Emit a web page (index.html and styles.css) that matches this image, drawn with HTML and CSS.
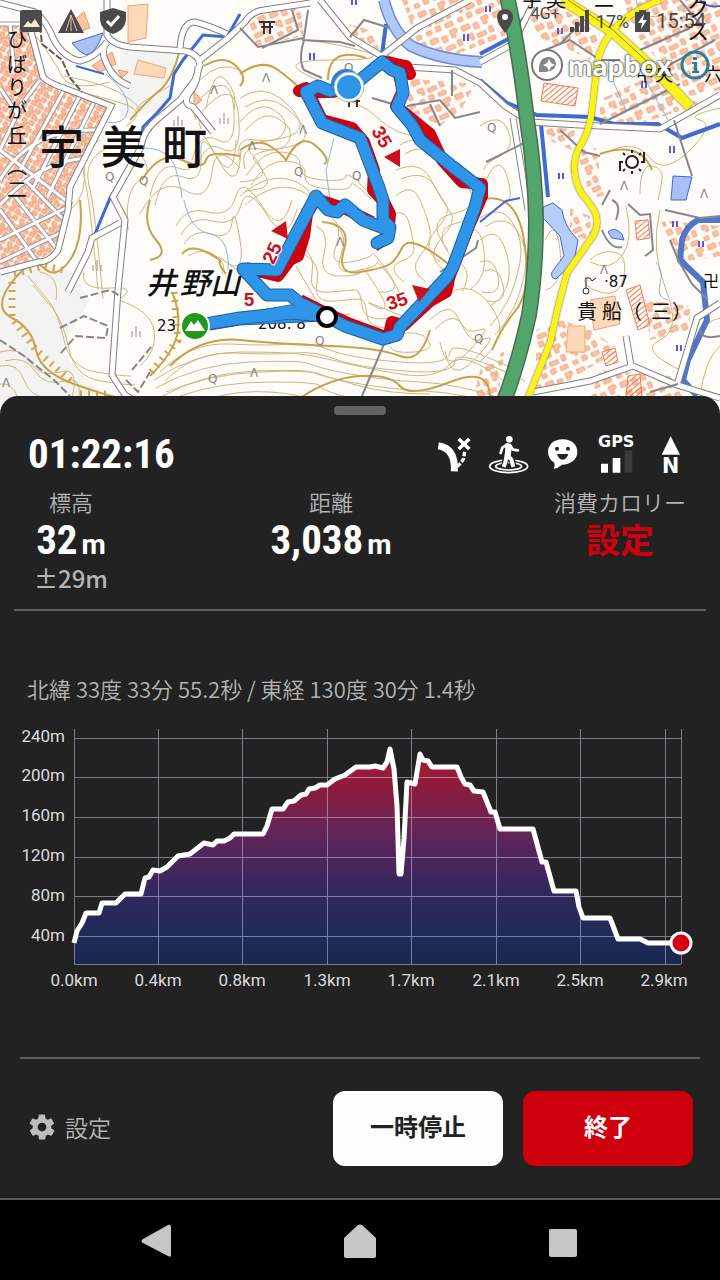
FILE: index.html
```
<!DOCTYPE html>
<html lang="ja">
<head>
  <meta charset="utf-8"/>
  <meta name="viewport" content="width=device-width, initial-scale=1"/>
  <link rel="stylesheet" href="styles.css">
  <title>活動中</title>
</head>
<body>
  <div class="map">
    <svg class="map-canvas" viewBox="0 0 720 416" preserveAspectRatio="xMidYMin slice" role="img" aria-label="地図">
      <defs>
        <pattern id="houses" width="15" height="13" patternUnits="userSpaceOnUse" patternTransform="rotate(28)">
          <path d="M1 1h4v3h2v3h-4v-2h-2zM8 1h5v4h-5zM1 8h5v4h-5zM8 7h3v2h3v3h-6z" fill="#fabf9f" stroke="#ee8a62" stroke-width=".8"/>
        </pattern>
        <pattern id="town" width="34" height="30" patternUnits="userSpaceOnUse" patternTransform="rotate(-24)">
          <path d="M2 2h8v5h-8zM14 4h5v6h-5zM24 1h7v4h-3v4h-4zM4 12h6v7h-3v-3h-3zM14 15h9v4h-9zM27 13h4v6h-4zM2 23h5v4h-5zM12 22h5v5h-5zM22 23h8v4h-8z" fill="#fbc4a4" stroke="#f0946c" stroke-width=".8"/>
        </pattern>
        <pattern id="hatch" width="4" height="4" patternUnits="userSpaceOnUse" patternTransform="rotate(-40)">
          <path d="M0 0h4" stroke="#ee7c55" stroke-width="2"/>
        </pattern>
        <g id="roads">
          <path d="M0 3L35 12Q46 20 54 40Q64 58 80 61Q95 58 107 42"/>
          <path d="M107 0V35Q112 45 130 47L185 51Q199 54 200 65L195 80L180 100L160 117Q143 130 141 147L113 197L125 220L118 290L112 375L125 395L140 404"/>
          <path d="M200 60L228 38L245 22Q252 11 264 10L310 3"/>
          <path d="M180 48Q182 22 195 22Q210 26 227 34"/>
          <path d="M107 42Q100 50 106 62Q113 80 130 86"/>
          <path d="M198 66Q199 82 188 95Q183 104 193 107L213 132"/>
          <path d="M320 0L350 37L383 57L407 67L455 70L480 83L505 106L530 122L580 125L660 129L720 95"/>
          <path d="M383 55L417 28L470 0"/>
          <path d="M480 62L513 44L532 6"/>
          <path d="M533 392L590 381L633 366L677 385L720 398"/>
          <path d="M626 336L631 366M677 385L697 318L720 303"/>
          <path d="M513 118L520 160L528 210"/>
          <path d="M68 292L88 252L92 238L120 223"/>
          <path d="M30 28L43 77Q50 84 64 88L111 106L70 187L68 210L58 250Q50 262 38 262L0 272"/>
        </g>
        <g id="streets">
          <path d="M0 88L16 112L40 80M0 24H36M10 24L14 70M22 104L0 150M64 90L20 170M80 95L32 190M95 100L48 196"/>
          <path d="M0 180Q30 128 96 130M0 205Q40 160 88 158M0 150L72 205M0 210L36 260M14 195L56 248M25 180L66 222M0 240L70 206M0 262L62 232"/>
        </g>
        <g id="highway">
          <path d="M507 -4Q519 50 527 120Q535 170 536 220Q536 270 529 315Q518 365 503 404"/>
        </g>
        <g id="main-road">
          <path d="M563 0L613 32L655 70L690 107" stroke-width="10"/>
          <path d="M660 0Q625 14 612 32Q597 50 596 75L592 110Q590 128 582 143Q572 157 575 175Q577 190 587 200L595 212Q600 224 593 236L567 273L558 307L550 343L527 400" stroke-width="6"/>
        </g>
        <g id="slopes">
          <path d="M240 98Q262 84 280 98T300 124T272 140T250 152T262 170T240 182"/>
          <path d="M240 122Q258 100 274 110T284 132T256 140T240 160"/>
          <path d="M246 176Q262 150 282 152T300 166T322 180T346 176T366 190"/>
          <path d="M240 196Q270 170 296 182T300 210"/>
          <path d="M400 145Q420 132 440 152T470 190T452 214T448 250"/>
          <path d="M396 170Q420 160 430 178T446 204T436 230T440 262"/>
          <path d="M330 216Q344 226 336 246T350 262T372 254T388 272T380 292"/>
          <path d="M300 246Q316 254 312 274T330 292T356 290T362 306T390 318"/>
          <path d="M192 160Q200 130 218 140T234 112T210 90T196 120"/>
          <path d="M150 196Q158 160 178 168T196 146T214 152T236 140"/>
          <path d="M176 226Q186 206 208 212T236 196T262 206T292 200"/>
          <path d="M98 290Q90 200 84 176T100 140"/>
          <path d="M28 276Q38 288 48 300T64 340T96 372T130 376"/>
          <path d="M0 352Q20 346 30 362T60 372T72 398"/>
          <path d="M160 372Q190 342 230 344T290 344T330 350T400 362T450 352T520 372"/>
          <path d="M156 388Q198 364 250 362T310 364T350 374T420 382T500 398"/>
          <path d="M430 320Q450 300 458 318T480 330T470 350T440 342"/>
          <path d="M480 218Q500 204 512 222T520 262T508 300T490 326M480 262Q494 256 498 276T482 292"/>
        </g>
        <g id="track">
          <path d="M195 326L240 318L290 313L326 316L345 326L383 339L397 335L400 327L447 277L453 267L475 207L480 188L453 167L420 140L412 125L397 107L403 93L400 73L392 70L382 62L360 80L350 87"/>
          <path d="M350 84L330 91L318 86L306 92L322 123L360 138L378 185L383 200V220L390 227L388 238L377 243"/>
          <path d="M386 229L363 220L345 205L337 212L328 210L316 196L277 270L243 269L267 295L290 295L300 303L326 316"/>
        </g>
      </defs>

      <rect width="720" height="416" fill="#fdfcf8"/>
      <path d="M0 258L70 270L90 300L60 350L120 416H0zM120 50L180 50L165 110L120 120z" fill="#f3f3f1"/>

      <!-- built-up areas -->
      <path d="M0 26H34L44 76L110 106L70 186L66 212L57 250L38 260L0 270z" fill="url(#houses)"/>
      <path d="M248 18L300 6L304 36L256 46zM402 0H500L506 36L440 60L418 44zM335 20L370 30L380 50L350 42zM403 78L476 84L462 108L440 126L410 110z" fill="url(#town)"/>
      <path d="M525 20L560 6L600 34L590 60L570 50L540 40zM622 0H720V90L690 96L640 40zM600 100L650 76L700 104L640 124H600z" fill="url(#town)"/>
      <path d="M545 125L575 130L572 150L548 140zM577 150L596 148L604 196L590 198zM570 208L590 216L592 240L570 236zM660 220L720 226V256L680 262zM645 300L690 306L690 330L650 340zM536 330L562 320L590 330L620 350L560 385L536 388zM480 370L505 350L498 396H474zM600 370L670 376L690 400H590z" fill="url(#town)"/>
      <path d="M84 12L90 28L78 32L74 20zM92 66L112 52L116 64L100 72zM118 70L128 72L122 78zM194 92L202 100L194 106z" fill="#fbc4a4" stroke="#f0946c"/>
      <path d="M128 6L148 4L146 38L128 42zM138 60L166 68L164 78L134 74zM568 326H585V352H566zM590 300L615 296L620 324L594 330z" fill="#fcd9b8" stroke="#f3a476"/>
      <g fill="url(#hatch)" stroke="#ee7c55">
        <path d="M544 83L578 88L575 106L541 101z"/>
        <path d="M626 290L640 285L650 325L638 330z"/>
        <path d="M635 221L648 220L650 238L637 240z"/>
        <path d="M602 352L615 348L618 362L606 366z"/>
        <path d="M628 376L640 374L642 398H626z"/>
      </g>

      <!-- contour lines -->
      <g class="contour">
        <use href="#slopes"/>
        <use href="#slopes" x="5" y="9"/>
        <path d="M304 40Q340 44 366 52T330 60T318 80M326 96Q360 100 378 118T420 136"/>
        <path d="M396 196Q412 182 420 200T430 230T420 256T426 282"/>
        <path d="M394 214Q406 208 410 226T414 250T400 262T404 282"/>
        <path d="M316 226Q330 232 324 254T340 276T362 270T378 290T374 306T402 316"/>
        <path d="M296 266Q304 280 316 300T350 314"/>
        <path d="M140 214Q160 176 184 190T212 172T240 168"/>
        <path d="M184 244Q194 228 212 234T232 222T240 240T226 262T240 272"/>
        <path d="M188 256Q204 246 216 256T222 274"/>
        <path d="M200 80Q220 60 240 70M206 108Q214 66 226 80T234 110"/>
        <path d="M70 210Q88 196 84 164T104 124M128 230Q124 190 140 180T136 150"/>
        <path d="M60 88Q100 96 124 104T126 126M64 76Q110 84 128 98T138 110T170 86"/>
        <path d="M36 36Q54 60 62 76T110 82M40 272Q60 276 56 300M84 272Q80 290 110 288T118 300Q150 310 154 330T140 366"/>
        <path d="M0 366Q18 362 24 380T50 398M0 384Q12 382 18 398"/>
        <path d="M154 380Q196 352 240 352T300 354T340 362T400 374T450 364T510 386"/>
        <path d="M166 392Q210 374 260 372T320 374T360 386T430 394"/>
        <path d="M180 396Q220 382 270 382T320 386T350 398"/>
        <path d="M212 398Q240 390 270 392T310 400M400 334Q420 330 428 340T414 352T390 346"/>
        <path d="M410 322Q440 296 456 290T486 300T500 330T480 362"/>
        <path d="M480 240Q496 226 504 246T508 282T490 306"/>
        <path d="M466 232Q480 222 484 250T470 290M458 262Q474 270 462 292"/>
        <path d="M480 126Q500 112 508 130T500 156T484 170M486 180Q500 150 508 180T496 198"/>
        <path d="M612 150Q636 140 650 158T690 150T700 120T720 108M640 194Q640 164 652 166T662 180T658 200"/>
        <path d="M590 260Q600 250 614 252T624 276T600 292T586 276M545 240Q556 216 560 250T546 290"/>
        <path d="M626 206Q634 240 622 256T590 262M660 210Q650 250 666 290T660 340T680 370"/>
        <path d="M696 340Q706 320 720 318M700 398Q704 360 720 346M636 0Q640 20 660 16"/>
      </g>
      <g class="contour contour-index">
        <path d="M240 74Q262 58 278 70T304 92T316 110M328 80Q328 46 366 58"/>
        <path d="M240 150Q258 138 270 146T286 160Q300 132 316 146T324 164"/>
        <path d="M204 66Q224 54 236 66T240 86M180 50Q172 80 160 90T130 120"/>
        <path d="M80 200Q84 240 70 260T44 268T12 282T12 318T36 350T74 384T120 398"/>
        <path d="M150 200Q142 224 156 240T150 260M182 254Q190 244 206 252T220 262T226 274"/>
        <path d="M142 180Q160 150 182 160T206 160T240 156"/>
        <path d="M322 222Q352 224 344 250T360 272T390 264T402 248T432 252T448 268"/>
        <path d="M172 292Q180 310 178 330T150 376"/>
        <path d="M170 366Q200 336 240 340T330 346T400 356T430 330"/>
        <path d="M300 398Q330 378 360 376T400 386T450 382T490 398"/>
        <path d="M480 200Q516 190 524 240T516 310T492 350M600 154Q640 140 652 170"/>
      </g>
      <path class="cliff" d="M12 282V318L36 350L74 384M14 274L44 266L64 270M174 292L178 340L148 376M80 394H108"/>

      <!-- water -->
      <g class="river">
        <path d="M72 43L103 33Q96 54 86 55Q78 52 72 43z" fill="#a9c0f6" stroke-width="1"/>
        <path d="M543 207L553 203L562 210Q564 226 578 240L574 262L556 279Q550 278 552 272L564 256L560 236L543 218z" fill="#b6cdfa" stroke-width="1"/>
        <path d="M673 176L692 177L686 200H671zM608 232Q614 226 622 234L624 240L612 238z" fill="#a9c0f6" stroke-width="1"/>
        <path d="M240 14L227 37L203 35L183 60L174 74L170 98L157 113L143 127L140 146L110 198L95 234" fill="none" stroke-width="3"/>
        <path d="M384 0Q391 30 411 46Q440 60 482 62" fill="none" stroke="#6d8fd4" stroke-width="12"/>
        <path d="M384 0Q391 30 411 46Q440 60 482 62" fill="none" stroke="#b2c8f8" stroke-width="9"/>
        <path d="M386 24L382 55M480 80L507 103L537 115L590 117L614 124L658 124L682 138L720 124M541 124L548 197M480 54L510 38L524 18" fill="none" stroke-width="4"/>
        <path d="M76 66L104 74M480 222L506 201L520 198M700 0Q706 8 720 6" fill="none" stroke-width="2"/>
        <path d="M720 220H698Q686 226 682 240L680 260L703 282L707 320L688 360L683 380L697 396" fill="none" stroke="#5076c8" stroke-width="6"/>
      </g>
      <path class="stream" d="M106 74Q130 94 128 110T104 122M143 148Q170 148 176 170T182 198M184 200Q190 230 210 234T228 270M334 138L326 170L330 200M608 70L626 110M640 70L668 120M656 262Q664 270 660 284T668 300"/>

      <!-- roads -->
      <use href="#streets" class="street-edge"/>
      <use href="#streets" class="street-fill"/>
      <use href="#roads" class="road-edge"/>
      <use href="#roads" class="road-fill"/>
      <path class="lane" d="M240 28L258 47L304 38L308 10M302 40L340 42L355 46M304 40Q298 60 304 70L322 78M262 48L298 30L292 10M350 37L364 20L390 28M372 98L396 105M407 106L440 100L455 118L480 112M452 96V70M430 104L440 126M560 44L590 14M545 50L570 40L600 60L620 60M640 50L690 28M660 70L715 40M600 124L680 84M560 130L584 152L600 156M486 162L530 140M610 190L602 205M674 120L692 176M628 204L640 215L650 214L653 250L645 256M602 230Q610 250 622 247M680 0L700 24M665 210L700 218L720 216M670 240L678 260L692 284L708 300M612 200Q622 204 616 220M650 392L678 384M700 330Q702 340 720 336M362 396L384 344M440 272L476 248L478 240"/>
      <path class="lane lane-dashed" d="M80 298L110 290L120 296M60 328L84 316L108 326L106 338L76 336L60 354M126 380L138 392L150 372M132 370L152 346M0 340L24 356L54 380L70 396"/>
      <path d="M40 26L42 44L62 60L70 78L82 92" fill="none" stroke="#5c5c5c" stroke-width="2" stroke-dasharray="7 2"/>
      <use href="#highway" class="highway-edge"/>
      <use href="#highway" class="highway-fill"/>
      <use href="#main-road" class="main-edge"/>
      <use href="#main-road" class="main-fill"/>
      <path d="M568 0L613 30L652 66" fill="none" stroke="#8f8a20" stroke-width="1"/>

      <!-- vegetation and land marks -->
      <g class="symbol">
        <text x="105" y="181">Q</text><text x="139" y="185">Q</text><text x="294" y="176">Q</text><text x="352" y="180">Q</text><text x="344" y="72">Q</text><text x="208" y="383">Q</text><text x="315" y="345">Q</text><text x="474" y="343">Q</text><text x="487" y="132">Q</text>
        <text x="210" y="94">Λ</text><text x="262" y="82">Λ</text><text x="299" y="134">Λ</text><text x="248" y="150">Λ</text><text x="336" y="246">Λ</text><text x="250" y="377">Λ</text><text x="2" y="387">Λ</text><text x="620" y="190">Λ</text><text x="700" y="198">Λ</text><text x="600" y="274">Λ</text>
      </g>
      <path d="M174 120v6M178 116v10M182 120v6M220 118v6M224 113v11M228 118v6M93 265v6M97 260v11M101 265v6M132 331v6M136 326v11M140 331v6" stroke="#8c8c8c" stroke-width="1"/>
      <path d="M352 0v5M356 0v5M310 53v7M314 53v7M464 34v7M468 34v7M486 6v6M490 6v6M558 28v6M562 28v6M642 81v7M646 81v7M670 146v7M674 146v7M559 173v6M563 173v6M673 221v6M677 221v6M699 241v6M703 241v6M677 345v6M681 345v6" stroke="#5a5ad8" stroke-width="2"/>
      <path d="M259 22H275M261 27H273M264 22V34M270 22V34M346 101H360M349 98V107M357 98V107" stroke="#333" stroke-width="2" fill="none"/>
      <g fill="none" stroke="#222" stroke-width="2">
        <circle cx="632" cy="162" r="6"/>
        <path d="M632 153v-3M632 171v3M623 162h-3v9M641 162h3v-10M625 155l-2-2M639 155l2-2M625 169l-2 2M639 169l2 2"/>
        <path d="M586 288v-10h4l2 3 4-3" stroke-width="1"/>
        <circle cx="586" cy="291" r="3" stroke-width="1"/>
      </g>

      <!-- place names -->
      <g class="place">
        <text font-size="45" font-weight="500" x="39 101 162" y="164">宇美町</text>
        <text font-size="20" x="7 7 7 7 7" y="47 72 95 118 143">ひばりが丘</text>
        <text font-size="20" x="7 7" y="174 197">︵二</text>
        <text font-size="30" font-weight="500" font-style="italic" x="146 180 210" y="294">井野山</text>
        <text font-size="20" x="577 602 622 651 672" y="319">貴船（三）</text>
        <text font-size="20" x="522 546 594" y="7">字美二</text>
        <text font-size="22" x="687 687" y="16 39">クス</text>
        <text font-size="18" x="636 655 704" y="81">中央六</text>
        <text font-size="16" x="703" y="287">卍</text>
        <text class="height" x="604" y="287">·87</text>
        <text class="height" x="157" y="331">23</text>
        <text class="height" x="258" y="329">208. 8</text>
      </g>

      <!-- planned course (red) below, recorded track (blue) above -->
      <g class="course">
        <path d="M326 313L350 324L388 338L392 322L404 325L430 301L446 292L448 284L449 278L468 228L482 196V184L462 182L442 160L430 134L396 106L403 90L398 72L410 74L406 66L382 61"/>
        <path d="M350 88L332 92L310 92L299 91L306 88L322 120L352 128L364 142L374 170L373 190L384 202L390 214L388 236L374 246"/>
        <path d="M372 222L346 209L316 199L307 214L304 236L298 256L290 260L278 276L246 268M300 300L326 313"/>
      </g>
      <path d="M210 330L212 319L238 314L296 304L330 315L322 321L240 325z" fill="#2f95e8" stroke="#1e5f9e" stroke-width="1"/>
      <use href="#track" class="track-edge"/>
      <path d="M212 328L214 320L240 315L290 305L326 315L240 324z" fill="#2f95e8"/>
      <use href="#track" class="track-fill"/>

      <g class="course-label">
        <text transform="translate(382 137) rotate(60)">35</text>
        <text transform="translate(272 253) rotate(-65)">25</text>
        <text transform="translate(249 299)">5</text>
        <text transform="translate(397 301) rotate(-18)">35</text>
        <path d="M384 157L400 149V167zM271 231L286 221L288 239zM412 285L430 289L419 302z" stroke="none"/>
      </g>
      <circle cx="327" cy="317" r="9" fill="#fff" stroke="#000" stroke-width="4"/>
      <circle cx="346" cy="84" r="15" fill="#2f7fc9"/>
      <circle cx="349" cy="87" r="15" fill="#fff" stroke="#9bb5cc"/>
      <circle cx="349" cy="87" r="12" fill="#2f95e8"/>
      <circle cx="195" cy="326" r="15" fill="#fff"/>
      <circle cx="195" cy="326" r="13" fill="#23991c"/>
      <path d="M185 331L191 321L194 325L198 320L205 331z" fill="#fff"/>
    </svg>

    <div class="statusbar">
      <svg width="22" height="22" viewBox="0 0 22 22"><rect width="22" height="22" rx="2"/><path d="M3 17L8 11L11 14L15 9L20 17z" fill="#f5ead2"/></svg>
      <svg width="26" height="24" viewBox="0 0 26 24"><path d="M13 0L26 24H0z"/><path d="M13 6L8 22M13 6V22M13 6L19 22" fill="none" stroke="#f0b7a0" stroke-width="1"/></svg>
      <svg width="26" height="26" viewBox="0 0 26 26"><path d="M13 0L26 4V12Q25 22 13 26Q1 22 0 12V4z"/><path d="M7 13L11 17L19 8" fill="none" stroke="#fff" stroke-width="3"/></svg>
      <svg class="push" width="16" height="24" viewBox="0 0 16 24"><path d="M8 0A8 8 0 0 1 16 8Q16 14 8 24Q0 14 0 8A8 8 0 0 1 8 0z"/><circle cx="8" cy="8" r="3" fill="#fff"/></svg>
      <span class="network">4G+</span>
      <svg width="20" height="22" viewBox="0 0 20 22"><path d="M0 17h4v5h-4zM5 12h4v10h-4zM10 6h4v16h-4zM15 0h4v22h-4z"/></svg>
      <span class="battery">17%</span>
      <svg width="15" height="22" viewBox="0 0 15 22"><path d="M4 0H11V2H15V22H0V2H4z"/><path d="M9 4L3 13H7L6 19L12 10H8z" fill="#fff"/></svg>
      <span>15:54</span>
    </div>

    <div class="attribution">
      <svg width="34" height="34" viewBox="0 0 34 34"><circle cx="17" cy="17" r="15" fill="#fff" stroke="#777" stroke-width="2"/><path d="M9 24Q8 9 19 9Q26 10 26 16Q25 25 9 24z" fill="#858585"/><path d="M19 11L21 15L25 17L21 19L19 23L17 19L13 17L17 15z" fill="#fff"/></svg>
      <span class="mapbox">mapbox</span>
      <button class="info" aria-label="地図について">
        <svg width="30" height="30" viewBox="0 0 30 30"><circle cx="15" cy="15" r="13" fill="none" stroke="#25809a" stroke-width="3"/><path d="M13 7h4v3h-4zM12 12h5v9h2v2h-7v-2h2v-7h-2z" fill="#25809a"/></svg>
      </button>
    </div>
  </div>

  <main class="panel">
    <button class="handle" aria-label="パネルを開閉"></button>
    <div class="top-row">
      <div class="time">01:22:16</div>
      <div class="indicators">
        <!-- off course warning -->
        <svg width="34" height="39" viewBox="48 38 102 117"><path d="M52 70Q104 78 100 147" fill="none" stroke="#fff" stroke-width="21"/><path d="M113 50L145 80M145 50L113 80" stroke="#fff" stroke-width="11"/><path d="M131 88L128 108Q122 122 108 132" fill="none" stroke="#fff" stroke-width="10" stroke-dasharray="14 5"/></svg>
        <!-- live position -->
        <svg width="41" height="39" viewBox="204 38 123 117"><g fill="none" stroke="#fff" stroke-width="5"><ellipse cx="266" cy="132" rx="57" ry="19"/><ellipse cx="266" cy="132" rx="39" ry="11"/></g><circle cx="268" cy="51" r="10" fill="#fff"/><path d="M264 70L259 98L275 108L280 135M260 98L252 134" fill="none" stroke="#222" stroke-width="19"/><path d="M264 72L260 98L274 111L280 134M260 96L257 116L251 134" fill="none" stroke="#fff" stroke-width="12" stroke-linejoin="round"/><path d="M262 66L247 76L242 92M270 68L279 82L294 84" fill="none" stroke="#fff" stroke-width="8" stroke-linecap="round" stroke-linejoin="round"/><path d="M256 64Q270 60 276 70L272 102L256 98z" fill="#fff"/></svg>
        <svg width="31" height="39" viewBox="381 38 93 117"><path d="M428 51C455 51 472 67 472 89C472 111 452 127 426 127Q414 138 401 139Q406 132 403 121Q384 110 384 89C384 67 402 51 428 51z" fill="#fff"/><circle cx="411" cy="79" r="6" fill="#222"/><circle cx="444" cy="79" r="6" fill="#222"/><path d="M411 95H445Q440 112 428 112Q415 111 411 95z" fill="#222"/></svg>
        <svg width="37" height="39" viewBox="537 38 111 117"><text class="gps" x="537" y="75">GPS</text><path d="M546 124h21v27h-21zM581 107h23v44h-23z" fill="#fff"/><path d="M617 84h23v67h-23z" fill="#3a3a3a"/></svg>
        <svg width="21" height="39" viewBox="720 38 63 117"><path d="M752 42L780 97H725z" fill="#fff"/><text class="north" x="752" y="152">N</text></svg>
      </div>
    </div>

    <div class="metrics">
      <div class="metric">
        <div class="label">標高</div>
        <div class="value">32<span class="unit">m</span></div>
        <div class="accuracy">±29m</div>
      </div>
      <div class="metric">
        <div class="label">距離</div>
        <div class="value">3,038<span class="unit">m</span></div>
      </div>
      <div class="metric">
        <div class="label">消費カロリー</div>
        <a class="set-link" href="#settings">設定</a>
      </div>
    </div>

    <div class="location">北緯 33度 33分 55.2秒 / 東経 130度 30分 1.4秒</div>

    <svg class="chart" viewBox="0 0 720 280" role="img" aria-label="標高グラフ">
      <defs>
        <linearGradient id="elevation" gradientUnits="userSpaceOnUse" x1="0" y1="30" x2="0" y2="245">
          <stop offset="0" stop-color="#b4152f"/>
          <stop offset=".12" stop-color="#981a38"/>
          <stop offset=".4" stop-color="#602558"/>
          <stop offset=".65" stop-color="#33285f"/>
          <stop offset=".85" stop-color="#202a58"/>
          <stop offset="1" stop-color="#1b2850"/>
        </linearGradient>
      </defs>
      <path fill="url(#elevation)" d="M74 245V224L77 212L82 204L86 194H99L102 184H116L125 175H141L145 159L149 158L153 151L160 152L167 148L178 137L190 135L204 124L213 126L217 122H224L230 119L234 115H263L267 107L272 90H283L288 83L294 82L301 76L306 75L309 70L315 69L320 66H327L335 60L345 56L356 48H370L375 47L383 49L387 43L390 30L394 50L397 87L399 155H401L404 120L407 63L415 65L420 35L423 41L428 42L432 48H457L461 58L465 65L470 66L474 72L483 73L491 93H495L500 110H533L542 143H546L554 172H576L579 188L583 199H610L618 220H640L648 224H681V245z"/>
      <path class="grid" d="M74 10V245M158 10V245M242 10V245M327 10V245M411 10V245M496 10V245M580 10V245M665 10V245M681 10V245M74 19H681M74 58H681M74 98H681M74 138H681M74 177H681M74 217H681M74 245H681"/>
      <path class="profile" d="M74 224L77 212L82 204L86 194H99L102 184H116L125 175H141L145 159L149 158L153 151L160 152L167 148L178 137L190 135L204 124L213 126L217 122H224L230 119L234 115H263L267 107L272 90H283L288 83L294 82L301 76L306 75L309 70L315 69L320 66H327L335 60L345 56L356 48H370L375 47L383 49L387 43L390 30L394 50L397 87L399 155H401L404 120L407 63L415 65L420 35L423 41L428 42L432 48H457L461 58L465 65L470 66L474 72L483 73L491 93H495L500 110H533L542 143H546L554 172H576L579 188L583 199H610L618 220H640L648 224H681"/>
      <circle cx="681" cy="224" r="10" fill="#d7000f" stroke="#fff" stroke-width="3"/>
      <g class="axis axis-y">
        <text x="65" y="23">240m</text>
        <text x="65" y="62">200m</text>
        <text x="65" y="102">160m</text>
        <text x="65" y="142">120m</text>
        <text x="65" y="182">80m</text>
        <text x="65" y="222">40m</text>
      </g>
      <g class="axis axis-x">
        <text x="74" y="267">0.0km</text>
        <text x="158" y="267">0.4km</text>
        <text x="242" y="267">0.8km</text>
        <text x="327" y="267">1.3km</text>
        <text x="411" y="267">1.7km</text>
        <text x="496" y="267">2.1km</text>
        <text x="580" y="267">2.5km</text>
        <text x="664" y="267">2.9km</text>
      </g>
    </svg>

    <div class="actions">
      <button class="settings">
        <svg width="30" height="30" viewBox="0 0 24 24"><path fill="#bdbdbd" d="M19.4 13a7.5 7.5 0 0 0 0-2l2.1-1.6a.5.5 0 0 0 .1-.7l-2-3.400a.5.5 0 0 0-.6-.2l-2.500 1a7.300 7.300 0 0 0-1.700-1l-.4-2.600a.5.5 0 0 0-.5-.5h-4a.5.5 0 0 0-.5.5l-.4 2.600a7.300 7.300 0 0 0-1.700 1l-2.500-1a.5.5 0 0 0-.6.2l-2 3.400a.5.5 0 0 0 .1.700L4.600 11a7.500 7.500 0 0 0 0 2l-2.100 1.600a.5.5 0 0 0-.1.700l2 3.400a.5.5 0 0 0 .6.200l2.500-1a7.300 7.300 0 0 0 1.700 1l.4 2.600a.5.5 0 0 0 .5.500h4a.5.5 0 0 0 .5-.5l.4-2.600a7.300 7.300 0 0 0 1.700-1l2.500 1a.5.5 0 0 0 .6-.2l2-3.400a.5.5 0 0 0-.1-.7zM12 15.500a3.500 3.500 0 1 1 0-7 3.500 3.500 0 0 1 0 7z"/></svg>
        設定
      </button>
      <button class="btn btn-pause">一時停止</button>
      <button class="btn btn-stop">終了</button>
    </div>
  </main>

  <nav class="navbar">
    <button aria-label="戻る"><svg width="34" height="34" viewBox="0 0 34 34"><path d="M3 15L28 1Q31 0 31 3V31Q31 34 28 32L3 19Q0 17 3 15z"/></svg></button>
    <button aria-label="ホーム"><svg width="34" height="34" viewBox="0 0 34 34"><path d="M1 14L15 1Q17 0 19 1L33 14V32Q33 34 31 34H3Q1 34 1 32z"/></svg></button>
    <button aria-label="履歴"><svg width="34" height="34" viewBox="0 0 34 34"><rect x="3" y="5" width="28" height="28" rx="2"/></svg></button>
  </nav>
</body>
</html>
```
FILE: styles.css
```
* {
  box-sizing: border-box;
}

body {
  margin: 0;
  min-height: 100vh;
  display: flex;
  flex-flow: column;
  background: #000;
  color: #fff;
  font-family: Roboto, "Noto Sans CJK JP", sans-serif;
}

button {
  border: 0;
  padding: 0;
  background: none;
  color: inherit;
  font: inherit;
  cursor: pointer;
}

svg {
  display: block;
}

/* map */

.map {
  position: relative;
  flex: 0 0 auto;
}

.map-canvas {
  width: 100%;
  height: 416px;
}

.contour {
  fill: none;
  stroke: #ceb680;
  stroke-width: 1;
}

.contour-index {
  stroke: #c9a04c;
  stroke-width: 2;
}

.cliff {
  fill: none;
  stroke: #cfa845;
  stroke-width: 7;
  stroke-dasharray: 2 6;
}

.river {
  stroke: #3f6ad0;
}

.stream {
  fill: none;
  stroke: #86b8ea;
  stroke-width: 1;
}

.street-edge,
.street-fill,
.road-edge,
.road-fill,
.main-edge,
.main-fill,
.highway-edge,
.highway-fill {
  fill: none;
}

.street-edge {
  stroke: #9a9a9a;
  stroke-width: 5;
}

.street-fill {
  stroke: #fff;
  stroke-width: 3;
}

.road-edge {
  stroke: #808080;
  stroke-width: 7;
}

.road-fill {
  stroke: #fff;
  stroke-width: 5;
}

.lane {
  fill: none;
  stroke: #85878c;
  stroke-width: 2;
}

.lane-dashed {
  stroke-dasharray: 8 3;
}

.highway-edge {
  stroke: #4a6b52;
  stroke-width: 16;
}

.highway-fill {
  stroke: #52a66c;
  stroke-width: 13;
}

.main-edge {
  stroke: #8d8b45;
  filter: drop-shadow(0 0 1px #77752f);
}

.main-fill {
  stroke: #fbf21c;
}

.symbol {
  font: 12px "DejaVu Sans", sans-serif;
  fill: #858585;
}

.place {
  font-family: "Noto Sans CJK JP", sans-serif;
  fill: #111;
}

.height {
  font: 15px "DejaVu Sans", sans-serif;
}

.course {
  fill: none;
  stroke: #d1000f;
  stroke-width: 12;
  stroke-linejoin: round;
}

.track-edge,
.track-fill {
  fill: none;
  stroke-linejoin: round;
  stroke-linecap: round;
}

.track-edge {
  stroke: #1e5f9e;
  stroke-width: 13;
}

.track-fill {
  stroke: #2f95e8;
  stroke-width: 11;
}

.course-label {
  font: bold 19px "Liberation Sans", sans-serif;
  fill: #cb1020;
  stroke: #fff;
  stroke-width: 2;
  paint-order: stroke;
  text-anchor: middle;
  dominant-baseline: central;
}

/* overlays on the map */

.statusbar {
  position: absolute;
  top: 8px;
  left: 20px;
  right: 14px;
  display: flex;
  align-items: center;
  gap: 6px;
  height: 26px;
  color: #474747;
  fill: #4a4a4a;
  font-size: 20px;
}

.statusbar svg + svg {
  margin-left: 10px;
}

.statusbar svg.push {
  margin-left: auto;
  margin-right: 12px;
}

.network {
  align-self: flex-start;
  margin-right: 4px;
  font-size: 16px;
  line-height: 12px;
}

.battery {
  font-size: 18px;
}

.attribution {
  position: absolute;
  top: 48px;
  right: 10px;
  display: flex;
  align-items: center;
  gap: 4px;
}

.mapbox {
  color: #fff;
  font: 900 29px/34px Lato, sans-serif;
  text-shadow: 0 0 1px #444, 0 0 2px #444, 0 0 2px #555;
}

.info {
  margin-left: 4px;
}

/* sheet with the activity data */

.panel {
  position: relative;
  flex: 1 0 auto;
  display: flex;
  flex-flow: column;
  margin-top: -20px;
  padding-top: 10px;
  border-bottom: 2px solid #5b5b5b;
  border-radius: 18px 18px 0 0;
  background: #222;
}

.handle {
  align-self: center;
  width: 52px;
  height: 9px;
  border-radius: 4px;
  background: #636363;
}

.top-row {
  display: flex;
  justify-content: space-between;
  align-items: center;
  margin-top: 16px;
  padding: 0 23px 0 28px;
}

.time,
.value {
  font-family: "Roboto Condensed", Roboto, sans-serif;
  font-weight: bold;
  font-size: 41px;
  line-height: 46px;
}

.indicators {
  display: grid;
  grid-template-columns: repeat(5, 54px);
  justify-items: center;
}

.gps,
.north {
  font-family: "DejaVu Sans", sans-serif;
  font-weight: bold;
  fill: #fff;
}

.gps {
  font-size: 48px;
}

.north {
  font-size: 62px;
  text-anchor: middle;
}

.metrics {
  display: flex;
  justify-content: space-between;
  margin: 8px 14px 0;
  padding: 0 20px 21px;
  border-bottom: 2px solid #606060;
}

.metric {
  display: flex;
  flex-flow: column;
  align-items: center;
}

.label,
.location {
  color: #b4b4b4;
  font-family: "Noto Sans CJK JP", sans-serif;
  font-weight: 350;
  font-size: 22px;
  line-height: 32px;
}

.unit {
  margin-left: 4px;
  font-family: Roboto, sans-serif;
  font-size: 28px;
}

.accuracy {
  color: #b4b4b4;
  font-family: "Noto Sans CJK JP", sans-serif;
  font-weight: 500;
  font-size: 24px;
  line-height: 20px;
}

.set-link {
  color: #d1000f;
  font-family: "Noto Sans CJK JP", sans-serif;
  font-weight: bold;
  font-size: 34px;
  line-height: 44px;
  text-decoration: none;
}

.location {
  margin: 61px 27px 15px;
}

.chart {
  width: 100%;
}

.grid {
  fill: none;
  stroke: #c4c4e0;
  stroke-opacity: .55;
  stroke-width: 1;
  shape-rendering: crispEdges;
}

.profile {
  fill: none;
  stroke: #fff;
  stroke-width: 5;
  stroke-linejoin: round;
}

.axis {
  font-size: 17px;
  fill: #dcdcdc;
}

.axis-x {
  text-anchor: middle;
}

.axis-y {
  text-anchor: end;
}

.actions {
  display: flex;
  align-items: center;
  gap: 20px;
  margin: 58px 20px 0;
  padding: 32px 7px;
  border-top: 2px solid #606060;
}

.settings {
  display: flex;
  align-items: center;
  gap: 8px;
  margin-right: auto;
  padding-bottom: 4px;
  color: #b4b4b4;
  font: 350 23px/30px "Noto Sans CJK JP", sans-serif;
}

.btn {
  width: 170px;
  height: 75px;
  padding-bottom: 6px;
  border-radius: 12px;
  font: bold 24px/30px "Noto Sans CJK JP", sans-serif;
}

.btn-pause {
  background: #fdfdfd;
  color: #222;
}

.btn-stop {
  background: #cf000e;
  color: #fff;
}

/* system buttons */

.navbar {
  display: grid;
  grid-template-columns: repeat(3, 1fr);
  align-items: center;
  justify-items: center;
  height: 80px;
  padding: 2px 56px 0;
  background: #000;
  fill: #c6c6c4;
}
```
